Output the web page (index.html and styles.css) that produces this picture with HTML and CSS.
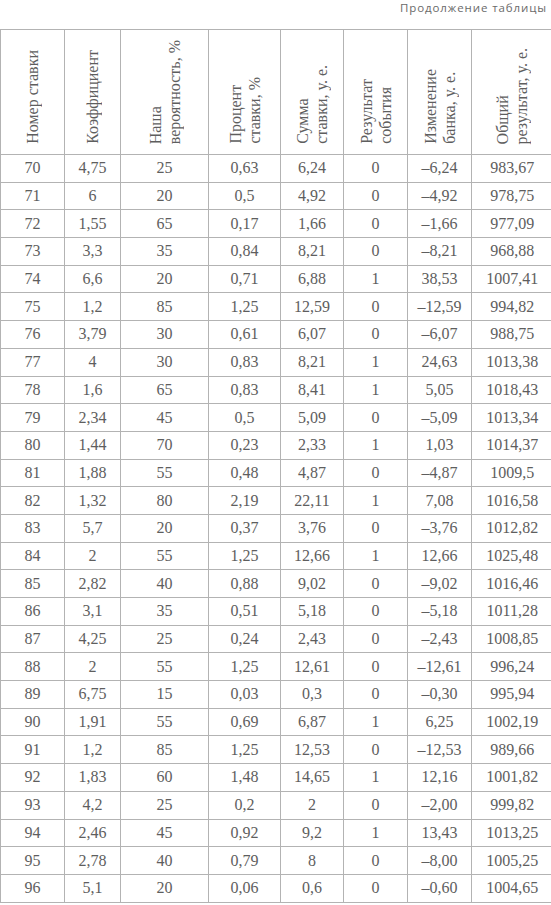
FILE: index.html
```html
<!DOCTYPE html>
<html lang="ru">
<head>
<meta charset="utf-8">
<link rel="stylesheet" href="styles.css">
</head>
<body>
<div class="page">
  <div class="caption">Продолжение таблицы</div>
  <table class="bets">
    <colgroup>
      <col class="c1"><col class="c2"><col class="c3"><col class="c4"><col class="c5"><col class="c6"><col class="c7"><col class="c8">
    </colgroup>
    <thead>
      <tr class="head">
        <th><div class="vt">Номер ставки</div></th>
        <th><div class="vt">Коэффициент</div></th>
        <th><div class="vt">Наша<br>вероятность, %</div></th>
        <th><div class="vt">Процент<br>ставки, %</div></th>
        <th><div class="vt">Сумма<br>ставки, у. е.</div></th>
        <th><div class="vt">Результат<br>события</div></th>
        <th><div class="vt">Изменение<br>банка, у. е.</div></th>
        <th><div class="vt">Общий<br>результат, у. е.</div></th>
      </tr>
    </thead>
    <tbody>
      <tr><td>70</td><td>4,75</td><td>25</td><td>0,63</td><td>6,24</td><td>0</td><td>–6,24</td><td>983,67</td></tr>
      <tr><td>71</td><td>6</td><td>20</td><td>0,5</td><td>4,92</td><td>0</td><td>–4,92</td><td>978,75</td></tr>
      <tr><td>72</td><td>1,55</td><td>65</td><td>0,17</td><td>1,66</td><td>0</td><td>–1,66</td><td>977,09</td></tr>
      <tr><td>73</td><td>3,3</td><td>35</td><td>0,84</td><td>8,21</td><td>0</td><td>–8,21</td><td>968,88</td></tr>
      <tr><td>74</td><td>6,6</td><td>20</td><td>0,71</td><td>6,88</td><td>1</td><td>38,53</td><td>1007,41</td></tr>
      <tr><td>75</td><td>1,2</td><td>85</td><td>1,25</td><td>12,59</td><td>0</td><td>–12,59</td><td>994,82</td></tr>
      <tr><td>76</td><td>3,79</td><td>30</td><td>0,61</td><td>6,07</td><td>0</td><td>–6,07</td><td>988,75</td></tr>
      <tr><td>77</td><td>4</td><td>30</td><td>0,83</td><td>8,21</td><td>1</td><td>24,63</td><td>1013,38</td></tr>
      <tr><td>78</td><td>1,6</td><td>65</td><td>0,83</td><td>8,41</td><td>1</td><td>5,05</td><td>1018,43</td></tr>
      <tr><td>79</td><td>2,34</td><td>45</td><td>0,5</td><td>5,09</td><td>0</td><td>–5,09</td><td>1013,34</td></tr>
      <tr><td>80</td><td>1,44</td><td>70</td><td>0,23</td><td>2,33</td><td>1</td><td>1,03</td><td>1014,37</td></tr>
      <tr><td>81</td><td>1,88</td><td>55</td><td>0,48</td><td>4,87</td><td>0</td><td>–4,87</td><td>1009,5</td></tr>
      <tr><td>82</td><td>1,32</td><td>80</td><td>2,19</td><td>22,11</td><td>1</td><td>7,08</td><td>1016,58</td></tr>
      <tr><td>83</td><td>5,7</td><td>20</td><td>0,37</td><td>3,76</td><td>0</td><td>–3,76</td><td>1012,82</td></tr>
      <tr><td>84</td><td>2</td><td>55</td><td>1,25</td><td>12,66</td><td>1</td><td>12,66</td><td>1025,48</td></tr>
      <tr><td>85</td><td>2,82</td><td>40</td><td>0,88</td><td>9,02</td><td>0</td><td>–9,02</td><td>1016,46</td></tr>
      <tr><td>86</td><td>3,1</td><td>35</td><td>0,51</td><td>5,18</td><td>0</td><td>–5,18</td><td>1011,28</td></tr>
      <tr><td>87</td><td>4,25</td><td>25</td><td>0,24</td><td>2,43</td><td>0</td><td>–2,43</td><td>1008,85</td></tr>
      <tr><td>88</td><td>2</td><td>55</td><td>1,25</td><td>12,61</td><td>0</td><td>–12,61</td><td>996,24</td></tr>
      <tr><td>89</td><td>6,75</td><td>15</td><td>0,03</td><td>0,3</td><td>0</td><td>–0,30</td><td>995,94</td></tr>
      <tr><td>90</td><td>1,91</td><td>55</td><td>0,69</td><td>6,87</td><td>1</td><td>6,25</td><td>1002,19</td></tr>
      <tr><td>91</td><td>1,2</td><td>85</td><td>1,25</td><td>12,53</td><td>0</td><td>–12,53</td><td>989,66</td></tr>
      <tr><td>92</td><td>1,83</td><td>60</td><td>1,48</td><td>14,65</td><td>1</td><td>12,16</td><td>1001,82</td></tr>
      <tr><td>93</td><td>4,2</td><td>25</td><td>0,2</td><td>2</td><td>0</td><td>–2,00</td><td>999,82</td></tr>
      <tr><td>94</td><td>2,46</td><td>45</td><td>0,92</td><td>9,2</td><td>1</td><td>13,43</td><td>1013,25</td></tr>
      <tr><td>95</td><td>2,78</td><td>40</td><td>0,79</td><td>8</td><td>0</td><td>–8,00</td><td>1005,25</td></tr>
      <tr><td>96</td><td>5,1</td><td>20</td><td>0,06</td><td>0,6</td><td>0</td><td>–0,60</td><td>1004,65</td></tr>
    </tbody>
  </table>
</div>
</body>
</html>
```
FILE: styles.css
```css
html, body {
  margin: 0;
  padding: 0;
  background: #ffffff;
}

.page {
  width: 551px;
  overflow: hidden;
}

.caption {
  height: 29px;
  box-sizing: border-box;
  padding: 0 4px 0 0;
  text-align: right;
  font-family: "Open Sans", "DejaVu Sans", sans-serif;
  font-size: 11.5px;
  line-height: 16px;
  letter-spacing: 0.9px;
  color: #6a6a6a;
}

.bets {
  border-collapse: collapse;
  table-layout: fixed;
  width: 552px;
  font-family: "Liberation Serif", "DejaVu Serif", serif;
  font-size: 16px;
  color: #5e5e5e;
}

.c1 { width: 64px; }
.c2 { width: 56px; }
.c3 { width: 88px; }
.c4 { width: 72px; }
.c5 { width: 63px; }
.c6 { width: 64px; }
.c7 { width: 64px; }
.c8 { width: 81px; }

.bets th,
.bets td {
  border: 1px solid #b3b3b3;
  padding: 0;
  text-align: center;
}

.bets th:last-child,
.bets td:last-child {
  border-right: none;
}

.head {
  height: 125px;
}

.head th {
  vertical-align: bottom;
  font-weight: normal;
  padding-bottom: 6px;
}

.vt {
  display: inline-block;
  writing-mode: vertical-rl;
  transform: rotate(180deg);
  text-align: left;
  line-height: 19px;
  white-space: nowrap;
}

.bets tbody tr {
  height: 27.7px;
}

.bets td {
  vertical-align: middle;
  line-height: 18px;
}
```
